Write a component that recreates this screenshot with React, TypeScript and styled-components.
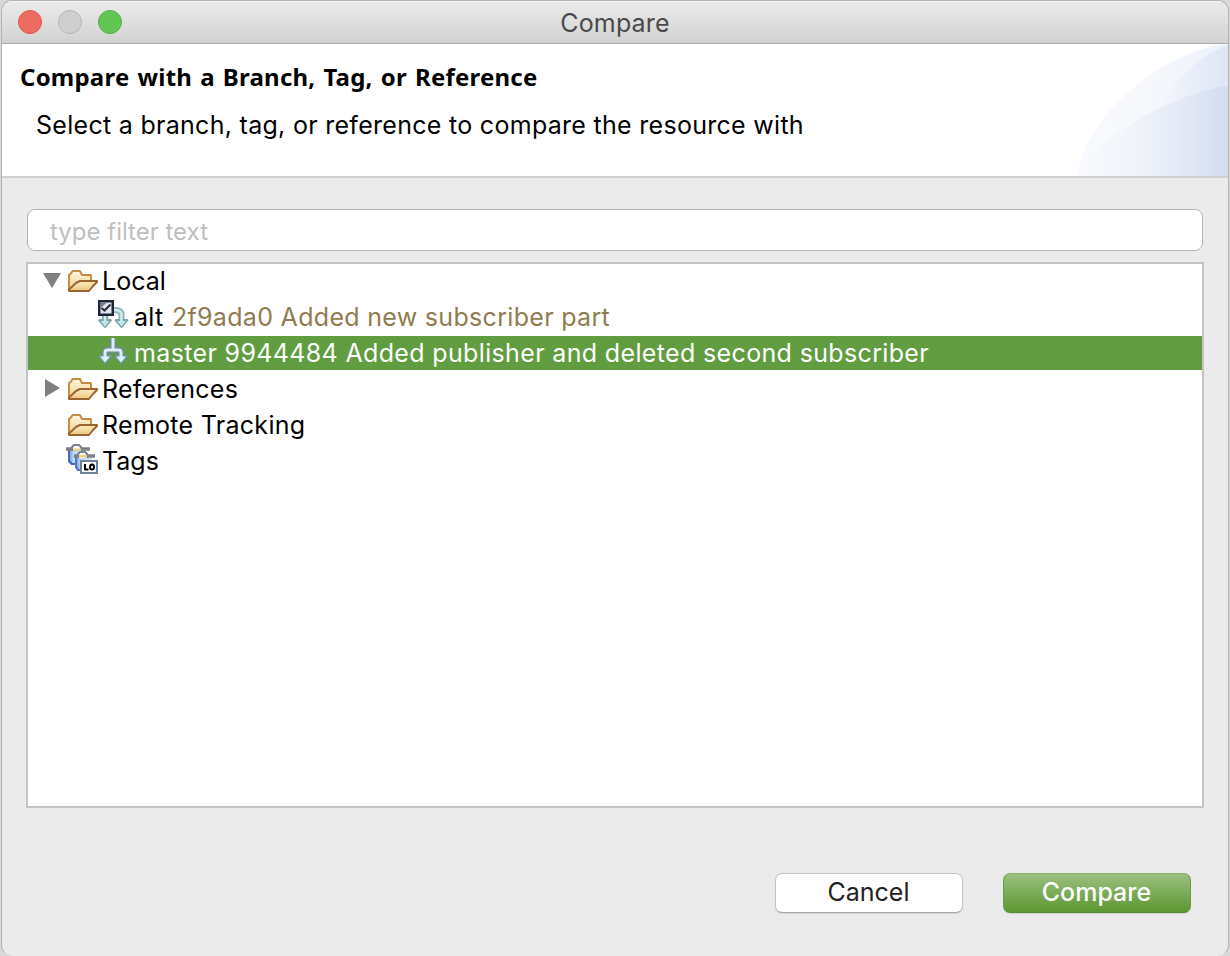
import React from "react";
import styled, { createGlobalStyle } from "styled-components";

const Global = createGlobalStyle`
  * { box-sizing: border-box; }
  body { margin: 0; background: #d9d9d9; font-family: Inter, "Liberation Sans", sans-serif; }
`;

const Window = styled.main`
  width: 1228px;
  height: 956px;
  margin-left: 1px;
  display: flex;
  flex-direction: column;
  overflow: hidden;
  background: #ebebeb;
  border: 1px solid #b4b4b4;
  border-bottom: none;
  border-radius: 11px;
`;

const TitleBar = styled.header`
  height: 43px;
  flex: none;
  display: grid;
  grid-template-columns: 1fr auto 1fr;
  align-items: center;
  padding: 0 16px;
  background: linear-gradient(#ebebeb, #d2d2d2);
  border-bottom: 1px solid #a9a9a9;
  box-shadow: inset 0 1px #f5f5f5;
`;

const Lights = styled.div`
  display: flex;
  gap: 16px;
`;

const Light = styled.span<{ $fill: string; $edge: string }>`
  width: 24px;
  height: 24px;
  border-radius: 50%;
  background: ${(p) => p.$fill};
  border: 1px solid ${(p) => p.$edge};
`;

const Title = styled.h1`
  margin: 0;
  padding-top: 2px;
  font-size: 25px;
  font-weight: 420;
  line-height: 40px;
  letter-spacing: 0.15px;
  color: #4a4a4a;
`;

const Banner = styled.section`
  height: 134px;
  flex: none;
  display: flex;
  justify-content: space-between;
  background: #fff;
  border-bottom: 2px solid #d0d0d0;
`;

const BannerText = styled.div`
  padding: 16px 0 0 18px;
`;

const Heading = styled.h2`
  margin: 0;
  width: max-content;
  font: 700 24px/34px "Noto Sans", sans-serif;
  letter-spacing: 0.22px;
  word-spacing: 1.6px;
  color: #000;
`;

const Message = styled.p`
  margin: 14px 0 0 16px;
  width: max-content;
  font-size: 25px;
  font-weight: 420;
  line-height: 34px;
  letter-spacing: 0.29px;
  color: #000;
`;

const Body = styled.section`
  flex: 1;
  display: flex;
  flex-direction: column;
  padding: 31px 24px 0;
`;

const Filter = styled.input`
  height: 42px;
  flex: none;
  margin: 0 1px;
  padding: 3px 22px 0;
  font: 400 24px Inter, sans-serif;
  background: #fff;
  border: 1px solid #b4b4b4;
  border-radius: 8px;
  outline: none;
  &::placeholder { color: #bfbfbf; opacity: 1; }
`;

const Tree = styled.div`
  height: 546px;
  margin-top: 11px;
  display: flex;
  flex-direction: column;
  gap: 2px;
  background: #fff;
  border: 2px solid #c4c4c4;
`;

const Row = styled.div<{ $depth: number; $selected?: boolean }>`
  height: 34px;
  flex: none;
  display: flex;
  align-items: center;
  padding-left: ${(p) => 14 + p.$depth * 32}px;
  background: ${(p) => (p.$selected ? "#619c41" : "transparent")};
  color: ${(p) => (p.$selected ? "#fff" : "#000")};
`;

const Twisty = styled.span`
  width: 24px;
  height: 34px;
  flex: none;
  svg { display: block; }
`;

const Icon = styled.svg`
  width: 32px;
  height: 32px;
  flex: none;
  display: block;
  overflow: visible;
`;

const Label = styled.span<{ $spacing?: number }>`
  margin-left: 4px;
  font-size: 25px;
  font-weight: 420;
  line-height: 34px;
  white-space: pre;
  letter-spacing: ${(p) => p.$spacing ?? 0}px;
`;

const Commit = styled.span`
  margin-left: 1px;
  color: #8f7c4f;
`;

const Actions = styled.footer`
  display: flex;
  justify-content: flex-end;
  gap: 40px;
  margin: 65px 13px 0 0;
`;

const Button = styled.button<{ $primary?: boolean }>`
  width: 188px;
  height: 40px;
  padding: 0 1px 2px 0;
  font: ${(p) => (p.$primary ? 450 : 420)} 25px/34px Inter, sans-serif;
  color: ${(p) => (p.$primary ? "#fff" : "#222")};
  background: ${(p) => (p.$primary ? "linear-gradient(#9dc07f, #7bac58 50%, #5c9732)" : "#fff")};
  border: 1px solid ${(p) => (p.$primary ? "#69a043" : "#c4c4c4")};
  border-top-color: ${(p) => (p.$primary ? "#86b165" : "#c4c4c4")};
  border-bottom-color: ${(p) => (p.$primary ? "#568d2f" : "#a8a8a8")};
  border-radius: 7px;
  box-shadow: 0 1px 1px rgba(0, 0, 0, 0.1);
`;

const Swoosh = () => (
  <svg width="150" height="132" viewBox="0 0 150 132">
    <defs>
      <linearGradient id="outer"><stop offset="0" stopColor="#f7fafe" /><stop offset=".4" stopColor="#f7f8fc" /><stop offset="1" stopColor="#edf2fc" /></linearGradient>
      <linearGradient id="upper"><stop offset="0" stopColor="#f4f6fc" /><stop offset="1" stopColor="#dde5f6" /></linearGradient>
      <linearGradient id="lower"><stop offset="0" stopColor="#f8fafd" /><stop offset=".35" stopColor="#f1f4fa" /><stop offset=".62" stopColor="#e7ecf8" /><stop offset="1" stopColor="#d2dcf1" /></linearGradient>
    </defs>
    <path d="M0 132C4 74 85 6 150 0V132Z" fill="url(#outer)" />
    <path d="M82 62C98 36 121 11 150 1V62Z" fill="url(#upper)" />
    <path d="M0 132C4 124 8 115 15 109C48 79 101 49 150 42V132Z" fill="url(#lower)" />
  </svg>
);

const FolderIcon = () => (
  <Icon viewBox="0 0 32 32">
    <defs>
      <linearGradient id="back" x2="0" y2="1"><stop stopColor="#fdf6e0" /><stop offset="1" stopColor="#f0d084" /></linearGradient>
      <linearGradient id="front" x2="0" y2="1"><stop stopColor="#fbeec4" /><stop offset="1" stopColor="#eac87c" /></linearGradient>
    </defs>
    <path d="M3 25V10L5 8.500L6.500 6H14L16 10H24.500L25 11V16" fill="url(#back)" stroke="#c58b45" strokeWidth="2" strokeLinejoin="round" />
    <path d="M3 26V24.500L10 18L14 16H31V17L27 21L23 26Z" fill="url(#front)" stroke="#9c6430" strokeWidth="2" strokeLinejoin="round" />
  </Icon>
);

const BranchIcon = () => (
  <Icon viewBox="0 0 32 32">
    <path d="M15 1V12M7 20V15.500Q7 13 9.500 13H20.500Q23 13 23 15.500V20" fill="none" stroke="#708ba0" strokeWidth="6" />
    <path d="M0 19.500L1 18H13L14 19.500L7 27.500ZM16 19.500L17 18H29L30 19.500L23 27.500Z" fill="#708fa2" />
    <path d="M15 1V13M7 21V15.500Q7 13 9.500 13H20.500Q23 13 23 15.500V21" fill="none" stroke="#dcedf5" strokeWidth="3" />
    <path d="M2 19.500H12L7 25.500ZM18 19.500H28L23 25.500Z" fill="#d5f6fa" />
  </Icon>
);

const CheckedBranchIcon = () => (
  <Icon viewBox="0 0 32 32">
    <path d="M15 9H17Q23.500 9 23.500 14V20" fill="none" stroke="#8fb4b7" strokeWidth="6" />
    <path d="M7 14V20" stroke="#7ea4a8" strokeWidth="6" />
    <path d="M0 19.500L1 18H13L14 19.500L7 27.500ZM16.500 19.500L17.500 18H29.500L30.500 19.500L23.500 27.500Z" fill="#7ca3a6" />
    <path d="M15 9H17Q23.500 9 23.500 14V21M7 14V21" fill="none" stroke="#d3ebed" strokeWidth="2.600" />
    <path d="M2.500 20H11.500L7 25.500ZM19 20H28L23.500 25.500Z" fill="#bdeaed" />
    <path d="M0 -1H16V15H0Z" fill="#20243a" />
    <path d="M2.500 1.500H13.500V12.500H2.500Z" fill="#e4e6eb" />
    <path d="M2.500 1.500H9L2.500 7Z" fill="#777c8b" />
    <path d="M3.500 7L6.500 9.500L12.500 3.500" fill="none" stroke="#2b3045" strokeWidth="2.200" />
  </Icon>
);

const TagsIcon = () => (
  <Icon viewBox="0 0 32 32">
    <defs>
      <linearGradient id="tag"><stop stopColor="#6485cf" /><stop offset=".3" stopColor="#b9d8fa" /><stop offset="1" stopColor="#d5e9fb" /></linearGradient>
    </defs>
    <path d="M2 4H20V17L18 20H5L2 17Z" fill="url(#tag)" />
    <path d="M3 5V16L6 19H9" fill="none" stroke="#4864b4" strokeWidth="2" />
    <path d="M0 4H6M16 4H24" stroke="#7b7f8b" strokeWidth="3.500" />
    <path d="M6 6V2L8 0H13L15 2V6" fill="#fff" stroke="#7b8291" strokeWidth="2" />
    <path d="M7 3.500H15V6H7Z" fill="#edcf85" />
    <path d="M9 11H26V26H12L9 22Z" fill="url(#tag)" />
    <path d="M10 12V22L12 25H15" fill="none" stroke="#5273c4" strokeWidth="2" />
    <path d="M8 11H13M22 11H29" stroke="#7b7f8b" strokeWidth="3.500" />
    <path d="M12 13V9L14 7H19L21 9V13" fill="#fff" stroke="#7b8291" strokeWidth="2" />
    <path d="M13 10H21V12.500H13Z" fill="#edcf85" />
    <path d="M15 16H31V28H15Z" fill="#fff" stroke="#718196" strokeWidth="2" />
    <path d="M19 19V25M18.500 24.500H22.500" fill="none" stroke="#000" strokeWidth="2" />
    <ellipse cx="26" cy="22" rx="2" ry="2.500" fill="none" stroke="#000" strokeWidth="2" />
  </Icon>
);

export default function App() {
  return (
    <>
      <Global />
      <Window>
        <TitleBar>
          <Lights>
            <Light $fill="#ed6b60" $edge="#d9574d" />
            <Light $fill="#cfcfcf" $edge="#b4b4b4" />
            <Light $fill="#62c655" $edge="#50b143" />
          </Lights>
          <Title>Compare</Title>
        </TitleBar>
        <Banner>
          <BannerText>
            <Heading>Compare with a Branch, Tag, or Reference</Heading>
            <Message>Select a branch, tag, or reference to compare the resource with</Message>
          </BannerText>
          <Swoosh />
        </Banner>
        <Body>
          <Filter placeholder="type filter text" />
          <Tree>
            <Row $depth={0}>
              <Twisty><svg width="24" height="34"><path d="M1 9H19L10 24Z" fill="#7f7f7f" /></svg></Twisty>
              <FolderIcon /><Label>Local</Label>
            </Row>
            <Row $depth={1}>
              <Twisty /><CheckedBranchIcon />
              <Label $spacing={0.31}>alt <Commit>2f9ada0 Added new subscriber part</Commit></Label>
            </Row>
            <Row $depth={1} $selected>
              <Twisty /><BranchIcon />
              <Label $spacing={0.35}>master 9944484 Added publisher and deleted second subscriber</Label>
            </Row>
            <Row $depth={0}>
              <Twisty><svg width="24" height="34"><path d="M3 7V25L18 16Z" fill="#7f7f7f" /></svg></Twisty>
              <FolderIcon /><Label $spacing={0.23}>References</Label>
            </Row>
            <Row $depth={0}><Twisty /><FolderIcon /><Label $spacing={0.29}>Remote Tracking</Label></Row>
            <Row $depth={0}><Twisty /><TagsIcon /><Label>Tags</Label></Row>
          </Tree>
          <Actions>
            <Button>Cancel</Button>
            <Button $primary>Compare</Button>
          </Actions>
        </Body>
      </Window>
    </>
  );
}
